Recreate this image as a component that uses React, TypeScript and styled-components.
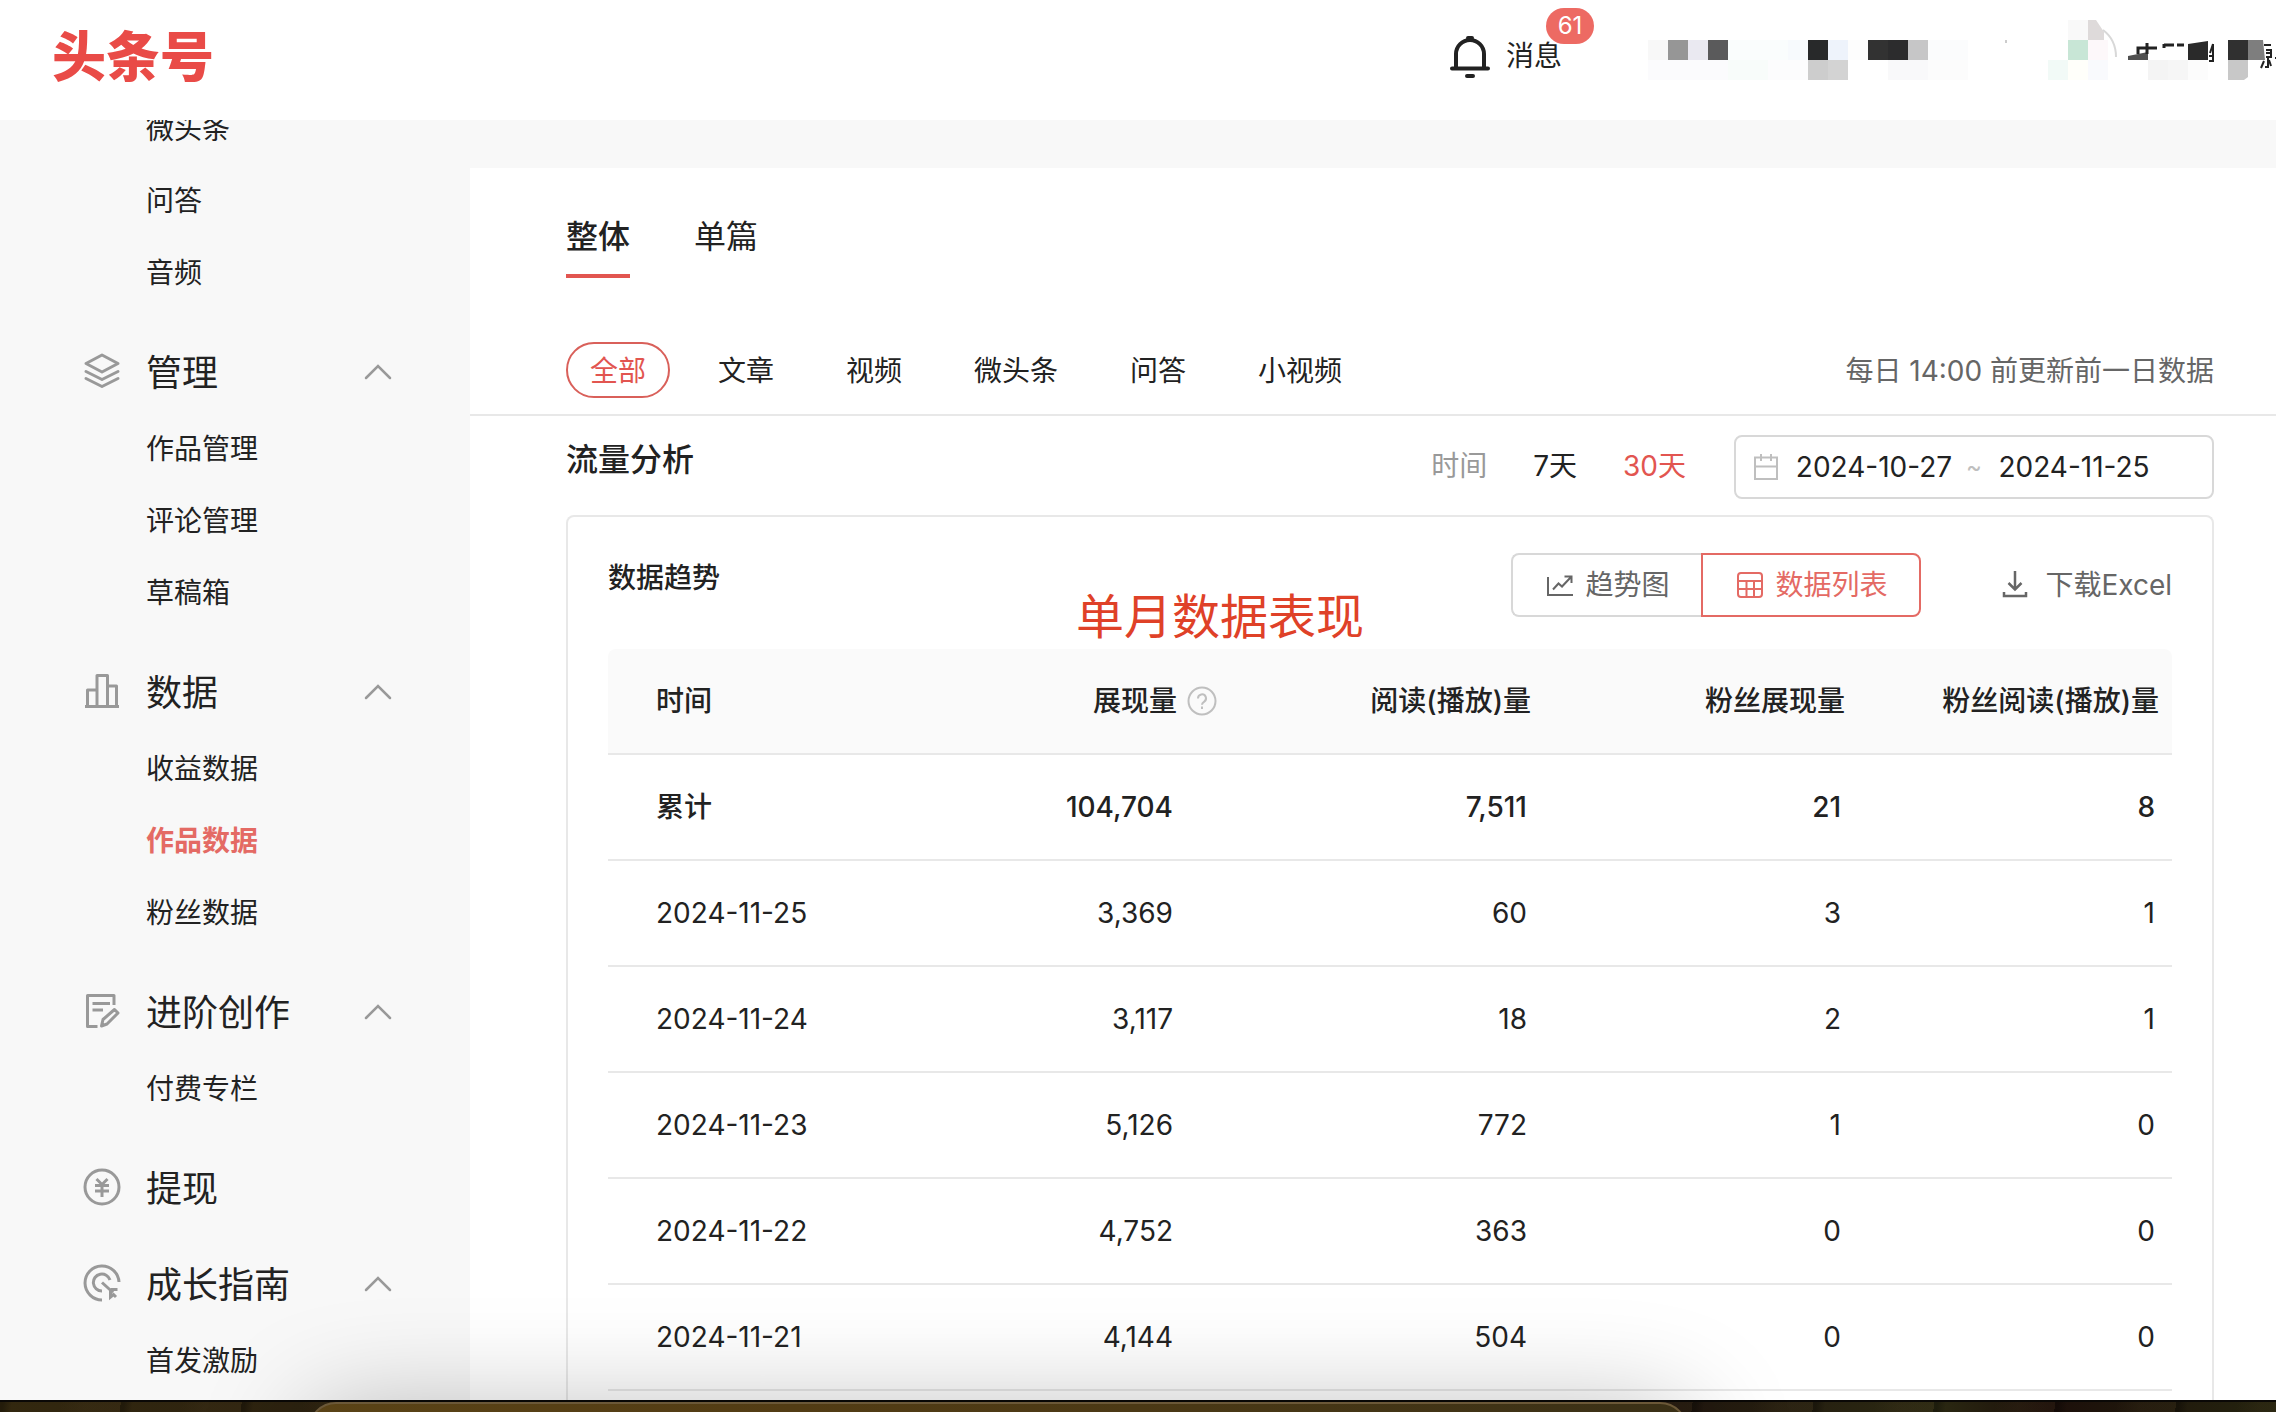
import React from "react";
import styled, { createGlobalStyle, css } from "styled-components";

const color = {
  text: "#222222",
  sub: "#666666",
  mute: "#999999",
  faint: "#bfbfbf",
  line: "#e8e8e8",
  border: "#d8d8d8",
  brand: "#e25550",
  brandSoft: "#e46a64",
  bg: "#f8f8f8",
};

const GlobalStyle = createGlobalStyle`
  *, *::before, *::after { box-sizing: border-box; }
  body {
    margin: 0;
    background: ${color.bg};
    color: ${color.text};
    font-family: Inter, "Noto Sans CJK SC", sans-serif;
    font-size: 28px;
    line-height: 40px;
  }
  button, input { font: inherit; color: inherit; }
  a { color: inherit; text-decoration: none; }
  h1, h2, h3, ul, p { margin: 0; padding: 0; }
  ul { list-style: none; }
`;

const plainButton = css`
  border: 0;
  padding: 0;
  background: none;
  cursor: pointer;
  white-space: nowrap;
`;

const Page = styled.div`
  display: grid;
  grid-template-rows: auto minmax(0, 1fr) auto;
  height: 100vh;
  overflow: hidden;
`;

/* ---------- header ---------- */

const Header = styled.header`
  display: flex;
  align-items: center;
  height: 120px;
  padding-left: 52px;
  background: #ffffff;
`;

const Logo = styled.a`
  && { color: #e94b47; }
  padding-bottom: 4px;
  font-size: 54px;
  font-weight: 900;
  line-height: 60px;
`;

const HeaderRight = styled.div`
  display: flex;
  align-items: center;
  gap: 78px;
  margin-left: auto;
`;

const MessageButton = styled.button`
  ${plainButton}
  position: relative;
  display: flex;
  align-items: center;
  gap: 14px;
  padding-bottom: 8px;
`;

const Badge = styled.span`
  position: absolute;
  top: -26px;
  right: -32px;
  min-width: 48px;
  padding: 0 8px;
  border-radius: 18px;
  background: #ed6a63;
  color: #ffffff;
  font-size: 24px;
  line-height: 36px;
  text-align: center;
`;

/* ---------- sidebar ---------- */

const Body = styled.div`
  display: grid;
  grid-template-columns: 470px minmax(0, 1fr);
  min-height: 0;
`;

const Sidebar = styled.aside`
  overflow: hidden;
  background: ${color.bg};
`;

const Nav = styled.nav`
  display: flex;
  flex-direction: column;
  gap: 16px;
  margin-top: -28px;
`;

const GroupHead = styled.button`
  ${plainButton}
  display: flex;
  align-items: center;
  gap: 24px;
  width: 100%;
  height: 80px;
  padding: 0 78px 0 82px;
  font-size: 36px;
  text-align: left;
  color: ${color.text};
`;

const GroupName = styled.span`
  flex: 1;
  padding-top: 2px;
`;

const NavList = styled.ul`
  padding-bottom: 8px;
`;

const NavLink = styled.a<{ $active?: boolean }>`
  display: block;
  padding: 2px 0 0 146px;
  line-height: 70px;
  ${(p) => p.$active && css`
    && { color: ${color.brandSoft}; }
    font-weight: 700;
  `}
`;

/* ---------- main ---------- */

const Main = styled.main`
  display: flex;
  flex-direction: column;
  margin-top: 48px;
  overflow: hidden;
  background: #ffffff;
`;

const Tabs = styled.div`
  display: flex;
  gap: 64px;
  padding: 48px 62px 0 96px;
`;

const Tab = styled.button<{ $active?: boolean }>`
  ${plainButton}
  padding-bottom: 16px;
  border-bottom: 4px solid ${(p) => (p.$active ? color.brand : "transparent")};
  font-size: 32px;
  font-weight: ${(p) => (p.$active ? 500 : 400)};
  line-height: 42px;
`;

const FilterBar = styled.div`
  display: flex;
  align-items: center;
  gap: 24px;
  margin-top: 64px;
  padding: 0 62px 16px 96px;
  border-bottom: 2px solid ${color.line};
`;

const Pill = styled.button<{ $active?: boolean }>`
  ${plainButton}
  padding: 2px 22px 0;
  border: 2px solid ${(p) => (p.$active ? "#d9605a" : "transparent")};
  border-radius: 28px;
  line-height: 50px;
  ${(p) => p.$active && css`color: ${color.brand};`}
`;

const UpdateNote = styled.p`
  margin-left: auto;
  padding-top: 2px;
  color: ${color.sub};
`;

const Section = styled.section`
  display: flex;
  flex: 1;
  flex-direction: column;
  gap: 16px;
  padding: 19px 62px 0 96px;
`;

const SectionHead = styled.div`
  display: flex;
  align-items: flex-start;
  justify-content: space-between;
`;

const SectionTitle = styled.h2`
  font-size: 32px;
  font-weight: 500;
  line-height: 50px;
`;

const RangeBar = styled.div`
  display: flex;
  align-items: center;
  gap: 48px;
`;

const RangeOptions = styled.div`
  display: flex;
  gap: 46px;
  padding-bottom: 2px;
`;

const RangeLabel = styled.span`
  color: ${color.mute};
`;

const RangeButton = styled.button<{ $active?: boolean }>`
  ${plainButton}
  ${(p) => p.$active && css`color: ${color.brand};`}
`;

const DateBox = styled.div`
  display: flex;
  align-items: center;
  width: 480px;
  height: 64px;
  padding: 0 18px;
  border: 2px solid ${color.border};
  border-radius: 8px;
`;

const DateInput = styled.input`
  width: 160px;
  padding: 0;
  border: 0;
  outline: 0;
  background: none;
  text-align: center;
`;

const DateDash = styled.span`
  width: 40px;
  color: ${color.faint};
  font-size: 24px;
  text-align: center;
`;

const CalendarSlot = styled.span`
  display: flex;
  margin-right: 16px;
`;

const Panel = styled.div`
  position: relative;
  flex: 1;
  padding: 36px 40px 0;
  border: 2px solid ${color.line};
  border-bottom: 0;
  border-radius: 8px 8px 0 0;
`;

const PanelHead = styled.div`
  display: flex;
  align-items: flex-start;
  justify-content: space-between;
  margin-bottom: 32px;
`;

const PanelTitle = styled.h3`
  font-size: 28px;
  font-weight: 500;
  line-height: 50px;
`;

const Callout = styled.p`
  position: absolute;
  top: 66px;
  left: 508px;
  color: #df4128;
  font-size: 48px;
  line-height: 68px;
`;

const PanelTools = styled.div`
  display: flex;
  align-items: center;
  gap: 80px;
`;

const Switcher = styled.div`
  display: flex;
`;

const SwitchButton = styled.button<{ $active?: boolean }>`
  ${plainButton}
  display: flex;
  align-items: center;
  gap: 12px;
  height: 64px;
  padding: 0 32px;
  border: 2px solid ${(p) => (p.$active ? color.brandSoft : color.border)};
  color: ${(p) => (p.$active ? color.brandSoft : color.sub)};
  &:first-child { border-right: 0; border-radius: 8px 0 0 8px; }
  &:last-child { border-radius: 0 8px 8px 0; }
`;

const DownloadButton = styled.button`
  ${plainButton}
  display: flex;
  align-items: center;
  gap: 16px;
  color: ${color.sub};
`;

const Table = styled.table`
  width: 100%;
  table-layout: fixed;
  border-collapse: separate;
  border-spacing: 0;
`;

const Th = styled.th<{ $first?: boolean }>`
  width: ${(p) => (p.$first ? "auto" : "314px")};
  height: 106px;
  padding: 0 ${(p) => (p.$first ? "0" : "13px")} 0 ${(p) => (p.$first ? "48px" : "0")};
  border-bottom: 2px solid ${color.line};
  background: #fafafa;
  font-weight: 500;
  text-align: ${(p) => (p.$first ? "left" : "right")};
  white-space: nowrap;
  &:first-child { border-top-left-radius: 8px; }
  &:last-child { border-top-right-radius: 8px; }
`;

const HelpLabel = styled.span`
  display: inline-flex;
  align-items: center;
  gap: 10px;
`;

const Td = styled.td<{ $kind: "date" | "help" | "num"; $strong?: boolean }>`
  height: 106px;
  padding: 0 ${(p) => ({ date: "0", help: "57px", num: "17px" })[p.$kind]} 0
    ${(p) => (p.$kind === "date" ? "48px" : "0")};
  border-bottom: 2px solid ${color.line};
  font-weight: ${(p) => (p.$strong ? 500 : 400)};
  text-align: ${(p) => (p.$kind === "date" ? "left" : "right")};
`;

/* ---------- desktop edge and dock ---------- */

const Desktop = styled.footer`
  position: relative;
  height: 12px;
  border-top: 2px solid #0a0806;
  background:
    repeating-linear-gradient(97deg, rgba(0, 0, 0, 0.3) 0 3px, transparent 12px 60px, rgba(80, 62, 36, 0.15) 84px 120px),
    linear-gradient(90deg, #33280f, #2c2210 15%, #22180f 74%, #2b2912 85%, #1c0f0a 90%, #25240f);
`;

const Dock = styled.div`
  position: absolute;
  top: 0;
  left: 308px;
  right: 588px;
  height: 200px;
  border: 2px solid #6b5838;
  border-radius: 28px;
  background: linear-gradient(90deg, #5a4316, #523c14 35%, #4b3915 60%, #3a3016);
  box-shadow: 0 10px 110px rgba(0, 0, 0, 0.28);
`;

/* ---------- icons ---------- */

const Glyph = styled.svg`
  display: block;
  flex: none;
  fill: none;
  stroke: currentColor;
`;

const FaintGlyph = styled(Glyph)`
  color: ${color.faint};
  stroke-width: 2;
`;

const GroupGlyph = styled(Glyph)`
  color: ${color.mute};
  stroke-width: 3;
`;

type IconName = "manage" | "data" | "create" | "cash" | "grow";

const iconShapes: Record<IconName, React.ReactNode> = {
  manage: (
    <g strokeLinejoin="round" strokeLinecap="round">
      <path d="M20 3 36 11.5 20 20 4 11.5Z" />
      <path d="M4 19.5 20 27.5 36 19.5M4 26.5 20 34.5 36 26.5" />
    </g>
  ),
  data: <path d="M3 34.5H37M5.5 34V18H15M15 34V3.5H25.5V34M25.5 14H34.5V34" strokeLinejoin="round" />,
  create: (
    <g strokeLinejoin="round">
      <path d="M32 13V3.5H5.5V34.5H15.5M10.5 11.5H28M10.5 18H21" />
      <path d="M19.5 34 21 27.5 32.5 17.5 36 21 25 32Z" />
    </g>
  ),
  cash: (
    <>
      <circle cx="20" cy="19" r="17" />
      <path d="M14.5 11 20 16.5 25.5 11M20 16.5V29M13 17.5H27M13 23H27" />
    </>
  ),
  grow: (
    <>
      <path d="M37 18A17 17 0 1 0 20 36M28 16A8.5 8.5 0 1 0 20 27M20 18.5 31 28.5" />
      <path d="M28.5 25V33L31.5 30.5 34 33M28.5 25.5H35.5" />
    </>
  ),
};

const GroupIcon = ({ name }: { name: IconName }) => (
  <GroupGlyph width="40" height="40" viewBox="0 0 40 40" aria-hidden="true">
    {iconShapes[name]}
  </GroupGlyph>
);

const Chevron = () => (
  <GroupGlyph width="28" height="28" viewBox="0 0 28 28" aria-hidden="true">
    <path d="M2 20 14 8 26 20" strokeWidth="2.5" strokeLinecap="round" />
  </GroupGlyph>
);

const BellIcon = () => (
  <Glyph width="44" height="44" viewBox="0 0 44 44" strokeWidth="4" aria-hidden="true">
    <path d="M8 34V20a14 14 0 0 1 28 0V34M4 34.5H40" strokeLinejoin="round" strokeLinecap="round" />
    <path d="M20 4h4M19 42h6" strokeLinecap="round" />
  </Glyph>
);

const CalendarIcon = () => (
  <FaintGlyph width="24" height="28" viewBox="0 0 24 28" aria-hidden="true">
    <path d="M1 4.5H23V26H1ZM1 13.5H23M7 1V8M17 1V8" />
  </FaintGlyph>
);

const TrendIcon = () => (
  <Glyph width="28" height="28" viewBox="0 0 28 28" strokeWidth="2" aria-hidden="true">
    <path d="M3 6V24H28M8 18.5 13.5 12.5 17 15.5 26 6M19.5 5.5H26.5V12" />
  </Glyph>
);

const GridIcon = () => (
  <Glyph width="28" height="28" viewBox="0 0 28 28" strokeWidth="2" aria-hidden="true">
    <rect x="3" y="2" width="24" height="24" rx="3" />
    <path d="M3 10H27M3 18H27M11.5 10V26M19 10V26" />
  </Glyph>
);

const DownloadIcon = () => (
  <Glyph width="28" height="28" viewBox="0 0 28 28" strokeWidth="2.5" aria-hidden="true">
    <path d="M14 0V18M7.5 12 14 18.5 20.5 12M3 21V25H25V21" />
  </Glyph>
);

const HelpIcon = () => (
  <FaintGlyph width="30" height="30" viewBox="0 0 30 30" aria-hidden="true">
    <circle cx="15" cy="15" r="13.5" />
    <path d="M11 12.5a4 4 0 1 1 6 3.300c-1.500 1-2 1.600-2 3M15 20.5v2.500" />
  </FaintGlyph>
);

const AccountArt = styled.svg`
  display: block;
  flex: none;
`;

/* Pixelated account area: x, y, width, height, fill. */
const mosaic: [number, number, number, number, string][] = [
  [8, 40, 20, 20, "#f8f8f8"], [28, 40, 20, 20, "#969696"], [48, 40, 20, 20, "#eae9f1"],
  [68, 40, 20, 20, "#5a5a5b"], [88, 40, 60, 20, "#fafdfd"], [148, 40, 20, 20, "#f7fafd"],
  [168, 40, 20, 20, "#28292a"], [188, 40, 20, 20, "#eef3fb"], [208, 40, 20, 20, "#fdfdfd"],
  [228, 40, 20, 20, "#323232"], [248, 40, 20, 20, "#2c2c2d"], [268, 40, 20, 20, "#c6c6c7"],
  [288, 40, 40, 20, "#fbfcfd"], [8, 60, 80, 20, "#fbfbfd"], [88, 60, 40, 20, "#f8fcfa"],
  [128, 60, 40, 20, "#fcfcfd"], [168, 60, 20, 20, "#cdcdcd"], [188, 60, 20, 20, "#d3d3d3"],
  [248, 60, 40, 20, "#f9f9fa"], [288, 60, 40, 20, "#fcfcfc"],
  [428, 20, 20, 20, "#f9f9f9"], [428, 40, 20, 20, "#c8e6d6"], [448, 40, 20, 20, "#fdf8fa"],
  [408, 60, 20, 20, "#f2faf7"], [428, 60, 20, 20, "#fffffa"], [448, 60, 20, 20, "#f9fafd"],
  [508, 60, 20, 20, "#f4f4f4"], [528, 60, 20, 20, "#f6f6f6"], [548, 60, 20, 20, "#fcfcfc"],
  [588, 40, 20, 20, "#303030"],
];

const Account = () => (
  <AccountArt width="636" height="120" viewBox="0 0 636 120" role="img" aria-label="账号">
    {mosaic.map(([x, y, w, h, fill]) => (
      <rect key={`${x}-${y}`} x={x} y={y} width={w} height={h} fill={fill} />
    ))}
    <path d="M448 20h8l8 12v8h-16Z" fill="#dedada" />
    <path d="M463 30C471 36 476 46 476 57" fill="none" stroke="#d8d8d8" strokeWidth="2" />
    <path d="M366 40v3" stroke="#cccccc" strokeWidth="2" />
    <path d="M488 56l20-4v8h-20Z" fill="#505050" />
    <path d="M498 54v-6h19M507 43v11M524 45h10M537 45h7M524 44v4" fill="none" stroke="#222222" strokeWidth="3" />
    <path d="M548 44l20-3v19h-20Z" fill="#2a2a2a" />
    <path d="M573 44l-3 9M569 56h5M569 61h5M573 44v18" fill="none" stroke="#222222" strokeWidth="2" />
    <path d="M608 40h15l2 20h-17Z" fill="#7e7e7e" />
    <path d="M588 60h20v17l-4 3h-16Z" fill="#c8c8c8" />
    <path d="M624 45h7M626 50h5v7h-5M626 53h5M628 57v10h-3M624 61l-3 7M629 60l2 6M635 58h2" fill="none" stroke="#222222" strokeWidth="2" />
  </AccountArt>
);

/* ---------- data ---------- */

type Group = { name?: string; icon?: IconName; items?: string[] };

const groups: Group[] = [
  { items: ["微头条", "问答", "音频"] },
  { name: "管理", icon: "manage", items: ["作品管理", "评论管理", "草稿箱"] },
  { name: "数据", icon: "data", items: ["收益数据", "作品数据", "粉丝数据"] },
  { name: "进阶创作", icon: "create", items: ["付费专栏"] },
  { name: "提现", icon: "cash" },
  { name: "成长指南", icon: "grow", items: ["首发激励"] },
];

const filters = ["全部", "文章", "视频", "微头条", "问答", "小视频"];

const rows = [
  ["累计", "104,704", "7,511", "21", "8"],
  ["2024-11-25", "3,369", "60", "3", "1"],
  ["2024-11-24", "3,117", "18", "2", "1"],
  ["2024-11-23", "5,126", "772", "1", "0"],
  ["2024-11-22", "4,752", "363", "0", "0"],
  ["2024-11-21", "4,144", "504", "0", "0"],
];

export default function App() {
  return (
    <Page>
      <GlobalStyle />
      <Header>
        <Logo href="#">头条号</Logo>
        <HeaderRight>
          <MessageButton type="button">
            <BellIcon />
            消息
            <Badge>61</Badge>
          </MessageButton>
          <Account />
        </HeaderRight>
      </Header>

      <Body>
        <Sidebar>
          <Nav>
            {groups.map((group, i) => (
              <div key={i}>
                {group.name && group.icon && (
                  <GroupHead type="button">
                    <GroupIcon name={group.icon} />
                    <GroupName>{group.name}</GroupName>
                    {group.items && <Chevron />}
                  </GroupHead>
                )}
                {group.items && (
                  <NavList>
                    {group.items.map((item) => (
                      <li key={item}>
                        <NavLink href="#" $active={item === "作品数据"}>{item}</NavLink>
                      </li>
                    ))}
                  </NavList>
                )}
              </div>
            ))}
          </Nav>
        </Sidebar>

        <Main>
          <Tabs>
            <Tab type="button" $active>整体</Tab>
            <Tab type="button">单篇</Tab>
          </Tabs>
          <FilterBar>
            {filters.map((name, i) => (
              <Pill type="button" key={name} $active={i === 0}>{name}</Pill>
            ))}
            <UpdateNote>每日 14:00 前更新前一日数据</UpdateNote>
          </FilterBar>

          <Section>
            <SectionHead>
              <SectionTitle>流量分析</SectionTitle>
              <RangeBar>
                <RangeOptions>
                  <RangeLabel>时间</RangeLabel>
                  <RangeButton type="button">7天</RangeButton>
                  <RangeButton type="button" $active>30天</RangeButton>
                </RangeOptions>
                <DateBox>
                  <CalendarSlot><CalendarIcon /></CalendarSlot>
                  <DateInput aria-label="开始日期" defaultValue="2024-10-27" />
                  <DateDash>~</DateDash>
                  <DateInput aria-label="结束日期" defaultValue="2024-11-25" />
                </DateBox>
              </RangeBar>
            </SectionHead>

            <Panel>
              <PanelHead>
                <PanelTitle>数据趋势</PanelTitle>
                <PanelTools>
                  <Switcher>
                    <SwitchButton type="button"><TrendIcon />趋势图</SwitchButton>
                    <SwitchButton type="button" $active><GridIcon />数据列表</SwitchButton>
                  </Switcher>
                  <DownloadButton type="button"><DownloadIcon />下载Excel</DownloadButton>
                </PanelTools>
              </PanelHead>
              <Callout>单月数据表现</Callout>
              <Table>
                <thead>
                  <tr>
                    <Th scope="col" $first>时间</Th>
                    <Th scope="col"><HelpLabel>展现量<HelpIcon /></HelpLabel></Th>
                    <Th scope="col">阅读(播放)量</Th>
                    <Th scope="col">粉丝展现量</Th>
                    <Th scope="col">粉丝阅读(播放)量</Th>
                  </tr>
                </thead>
                <tbody>
                  {rows.map((row, r) => (
                    <tr key={row[0]}>
                      {row.map((cell, c) => (
                        <Td key={c} $strong={r === 0} $kind={c === 0 ? "date" : c === 1 ? "help" : "num"}>
                          {cell}
                        </Td>
                      ))}
                    </tr>
                  ))}
                </tbody>
              </Table>
            </Panel>
          </Section>
        </Main>
      </Body>

      <Desktop>
        <Dock />
      </Desktop>
    </Page>
  );
}
